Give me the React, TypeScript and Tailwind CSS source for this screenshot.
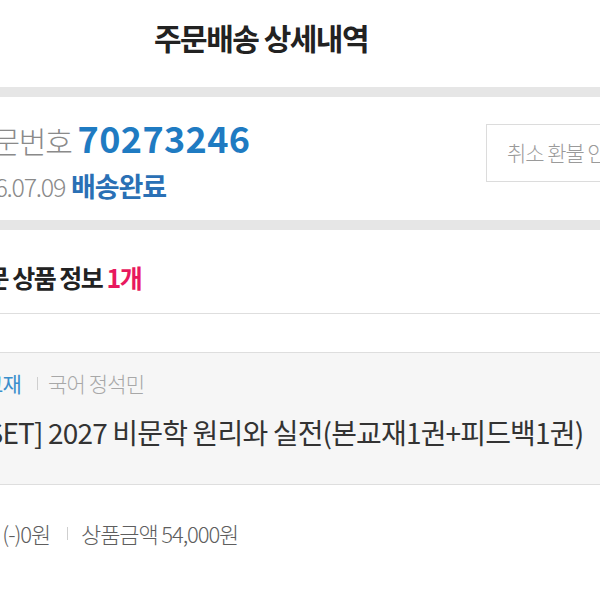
import React from 'react'

// 주문배송 상세 화면 (모바일 웹뷰 일부)
const order = {
  no: '70273246',
  date: '2026.07.09',
  status: '배송완료',
}

const item = {
  type: '교재',
  teacher: '국어 정석민',
  name: '[SET] 2027 비문학 원리와 실전(본교재1권+피드백1권)',
  discount: '(-)0원',
  price: '54,000원',
}

const Divider = ({ className = '' }: { className?: string }) => (
  <span className={`inline-block h-[13px] w-px bg-[#cfcfcf] ${className}`} />
)

const App: React.FC = () => {
  return (
    <div className="h-[600px] w-[600px] overflow-hidden bg-white font-['Noto_Sans_CJK_KR','Noto_Sans',sans-serif] text-[#222]">
      {/* 상단 타이틀 */}
      <header className="flex h-[87px] w-[522px] items-center justify-center pb-[14px]">
        <h1 className="text-[30px] font-bold leading-none tracking-[-0.05em] text-[#222]">주문배송 상세내역</h1>
      </header>
      <div className="h-[10px] bg-[#e6e6e6]" />

      {/* 주문번호 / 상태 */}
      <section className="-ml-[34px] flex h-[123px] w-[694px] items-center">
        <div className="flex flex-col">
          <div className="flex items-baseline gap-[6px] leading-none">
            <span className="text-[30px] font-light tracking-[-0.04em] text-[#8a8a8a]">주문번호</span>
            <span className="text-[36px] font-bold tracking-[0.01em] text-[#1f7bc2]">{order.no}</span>
          </div>
          <div className="-ml-[8px] mt-[17px] flex items-baseline gap-[6px] leading-none">
            <span className="text-[25px] font-light tracking-[-0.05em] text-[#8a8a8a]">{order.date}</span>
            <span className="text-[27px] font-bold tracking-[-0.04em] text-[#2a70b5]">{order.status}</span>
          </div>
        </div>
        <button className="mb-[11px] ml-auto flex h-[58px] w-[174px] items-center border border-[#dcdcdc] px-[20px] text-[21px] font-light tracking-[-0.05em] whitespace-nowrap text-[#9a9a9a]">
          취소 환불 안내
        </button>
      </section>
      <div className="h-[10px] bg-[#e6e6e6]" />

      {/* 주문 상품 정보 */}
      <section className="h-[84px] border-b border-[#dedede] pt-[12px]">
        <h2 className="-ml-[35px] flex h-full items-center text-[25px] font-bold tracking-[-0.06em] text-[#222]">
          주문 상품 정보&nbsp;<span className="text-[#e8185e]">1개</span>
        </h2>
      </section>
      <div className="h-[38px]" />

      <section className="h-[133px] border-y border-[#dedede] bg-[#f6f6f6]">
        <div className="-ml-[16px] flex flex-col pt-[20px]">
          <div className="flex items-center text-[21px] leading-none tracking-[-0.04em]">
            <span className="text-[#3a8fcc]">{item.type}</span>
            <Divider className="ml-[16px] mr-[10px]" />
            <span className="font-light text-[#a8a8a8]">{item.teacher}</span>
          </div>
          <p className="-ml-[6px] mt-[24px] whitespace-nowrap text-[28px] leading-none tracking-[-0.03em] text-[#333]">{item.name}</p>
        </div>
      </section>

      <section className="-ml-[78px] flex h-[96px] items-center whitespace-nowrap text-[22px] font-light tracking-[-0.05em] text-[#5e5e5e]">
        <span>할인금액 {item.discount}</span>
        <Divider className="ml-[17px] mr-[13px]" />
        <span>상품금액 {item.price}</span>
      </section>
    </div>
  )
}

export default App
